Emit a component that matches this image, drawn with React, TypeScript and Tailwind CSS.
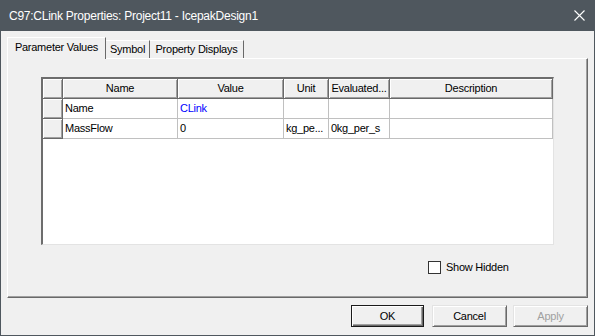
import React from 'react'

const font = { fontFamily: '"Liberation Sans", Arial, sans-serif' }

const cols = [
  { key: 'hdr', w: 'w-[20px]' },
  { key: 'name', label: 'Name', w: 'w-[115px]' },
  { key: 'value', label: 'Value', w: 'w-[106px]' },
  { key: 'unit', label: 'Unit', w: 'w-[45px]' },
  { key: 'eval', label: 'Evaluated...', w: 'w-[61px]' },
  { key: 'desc', label: 'Description', w: 'flex-1' },
]

const rows = [
  { name: 'Name', value: 'CLink', unit: '', evaluated: '', blue: true },
  { name: 'MassFlow', value: '0', unit: 'kg_pe...', evaluated: '0kg_per_s', blue: false },
]

const raised =
  'bg-[#f0f0f0] border-r border-b border-[#696969] shadow-[inset_1px_1px_0_#ffffff,inset_-1px_-1px_0_#a0a0a0]'

function Grid() {
  return (
    <div className="w-[513px] h-[168px] bg-white border-l-2 border-t-2 border-[#6d6d6d] border-r border-r-[#e3e3e3] border-b border-b-[#e3e3e3] overflow-hidden">
      <div className="flex h-[20px]">
        {cols.map((c) => (
          <div
            key={c.key}
            className={`${c.w} ${raised} flex items-center justify-center whitespace-nowrap overflow-hidden`}
          >
            {c.label}
          </div>
        ))}
      </div>
      {rows.map((r) => (
        <div key={r.name} className="flex h-[20px]">
          <div className={`w-[20px] ${raised}`} />
          <div className="w-[115px] border-r border-b border-[#c0c0c0] flex items-center pl-[2px]">{r.name}</div>
          <div
            className={`w-[106px] border-r border-b border-[#c0c0c0] flex items-center pl-[2px] ${
              r.blue ? 'text-[#0000ff]' : ''
            }`}
          >
            {r.value}
          </div>
          <div className="w-[45px] border-r border-b border-[#c0c0c0] flex items-center pl-[2px] whitespace-nowrap overflow-hidden">
            {r.unit}
          </div>
          <div className="w-[61px] border-r border-b border-[#c0c0c0] flex items-center pl-[2px] whitespace-nowrap overflow-hidden">
            {r.evaluated}
          </div>
          <div className="flex-1 border-r border-b border-[#c0c0c0]" />
        </div>
      ))}
    </div>
  )
}

function Button({ label, primary, disabled }: { label: string; primary?: boolean; disabled?: boolean }) {
  return (
    <div
      className={`h-[22px] flex items-center justify-center bg-[#f0f0f0] ${
        primary
          ? 'w-[73px] border border-[#1a1a1a] shadow-[inset_1px_1px_0_#ffffff,inset_-1px_-1px_0_#696969,inset_-2px_-2px_0_#a0a0a0]'
          : 'w-[75px] border-t border-l border-[#e3e3e3] border-r border-b border-r-[#696969] border-b-[#696969] shadow-[inset_1px_1px_0_#ffffff,inset_-1px_-1px_0_#a0a0a0]'
      } ${disabled ? 'text-[#a0a0a0]' : 'text-black'}`}
    >
      {label}
    </div>
  )
}

export default function App() {
  return (
    <div className="w-[595px] h-[336px] flex flex-col text-[11px] tracking-[-0.25px] text-black" style={font}>
      <div className="h-[31px] bg-[#4f575e] flex items-center justify-between pl-[9px] pr-[10px] text-white text-[12px] tracking-[-0.25px]">
        <span>C97:CLink Properties: Project11 - IcepakDesign1</span>
        <svg width="11" height="11" viewBox="0 0 11 11" className="mt-[-1px]">
          <path d="M0.5 0.5 L10.5 10.5 M10.5 0.5 L0.5 10.5" stroke="#ffffff" strokeWidth="1.1" />
        </svg>
      </div>
      <div className="flex-1 flex flex-col bg-[#f0f0f0] border-x border-b border-[#4f575e] px-[6px] pt-[6px] pb-[8px]">
        <div className="h-[21px] flex">
          <div className="relative z-10 w-[99px] h-[22px] self-start bg-[#f0f0f0] border-l border-t border-white border-r border-r-[#696969] flex items-center justify-center pb-[2px]">
            Parameter Values
          </div>
          <div className="w-[44px] h-[18px] self-end border-t border-white border-r border-r-[#696969] flex items-center justify-center">
            Symbol
          </div>
          <div className="w-[94px] h-[18px] self-end border-t border-white border-r border-r-[#696969] flex items-center justify-center">
            Property Displays
          </div>
        </div>
        <div className="h-[240px] flex flex-col border-l border-t border-white border-r border-b border-r-[#696969] border-b-[#696969] shadow-[inset_-1px_-1px_0_#a0a0a0] pl-[33px] pt-[18px]">
          <Grid />
          <div className="flex items-center mt-[14px] ml-[387px]">
            <div className="w-[13px] h-[13px] bg-white border border-[#333333]" />
            <span className="ml-[5px]">Show Hidden</span>
          </div>
        </div>
        <div className="flex justify-end mt-[7px]">
          <Button label="OK" primary />
          <div className="w-[8px]" />
          <Button label="Cancel" />
          <div className="w-[6px]" />
          <Button label="Apply" disabled />
        </div>
      </div>
    </div>
  )
}
